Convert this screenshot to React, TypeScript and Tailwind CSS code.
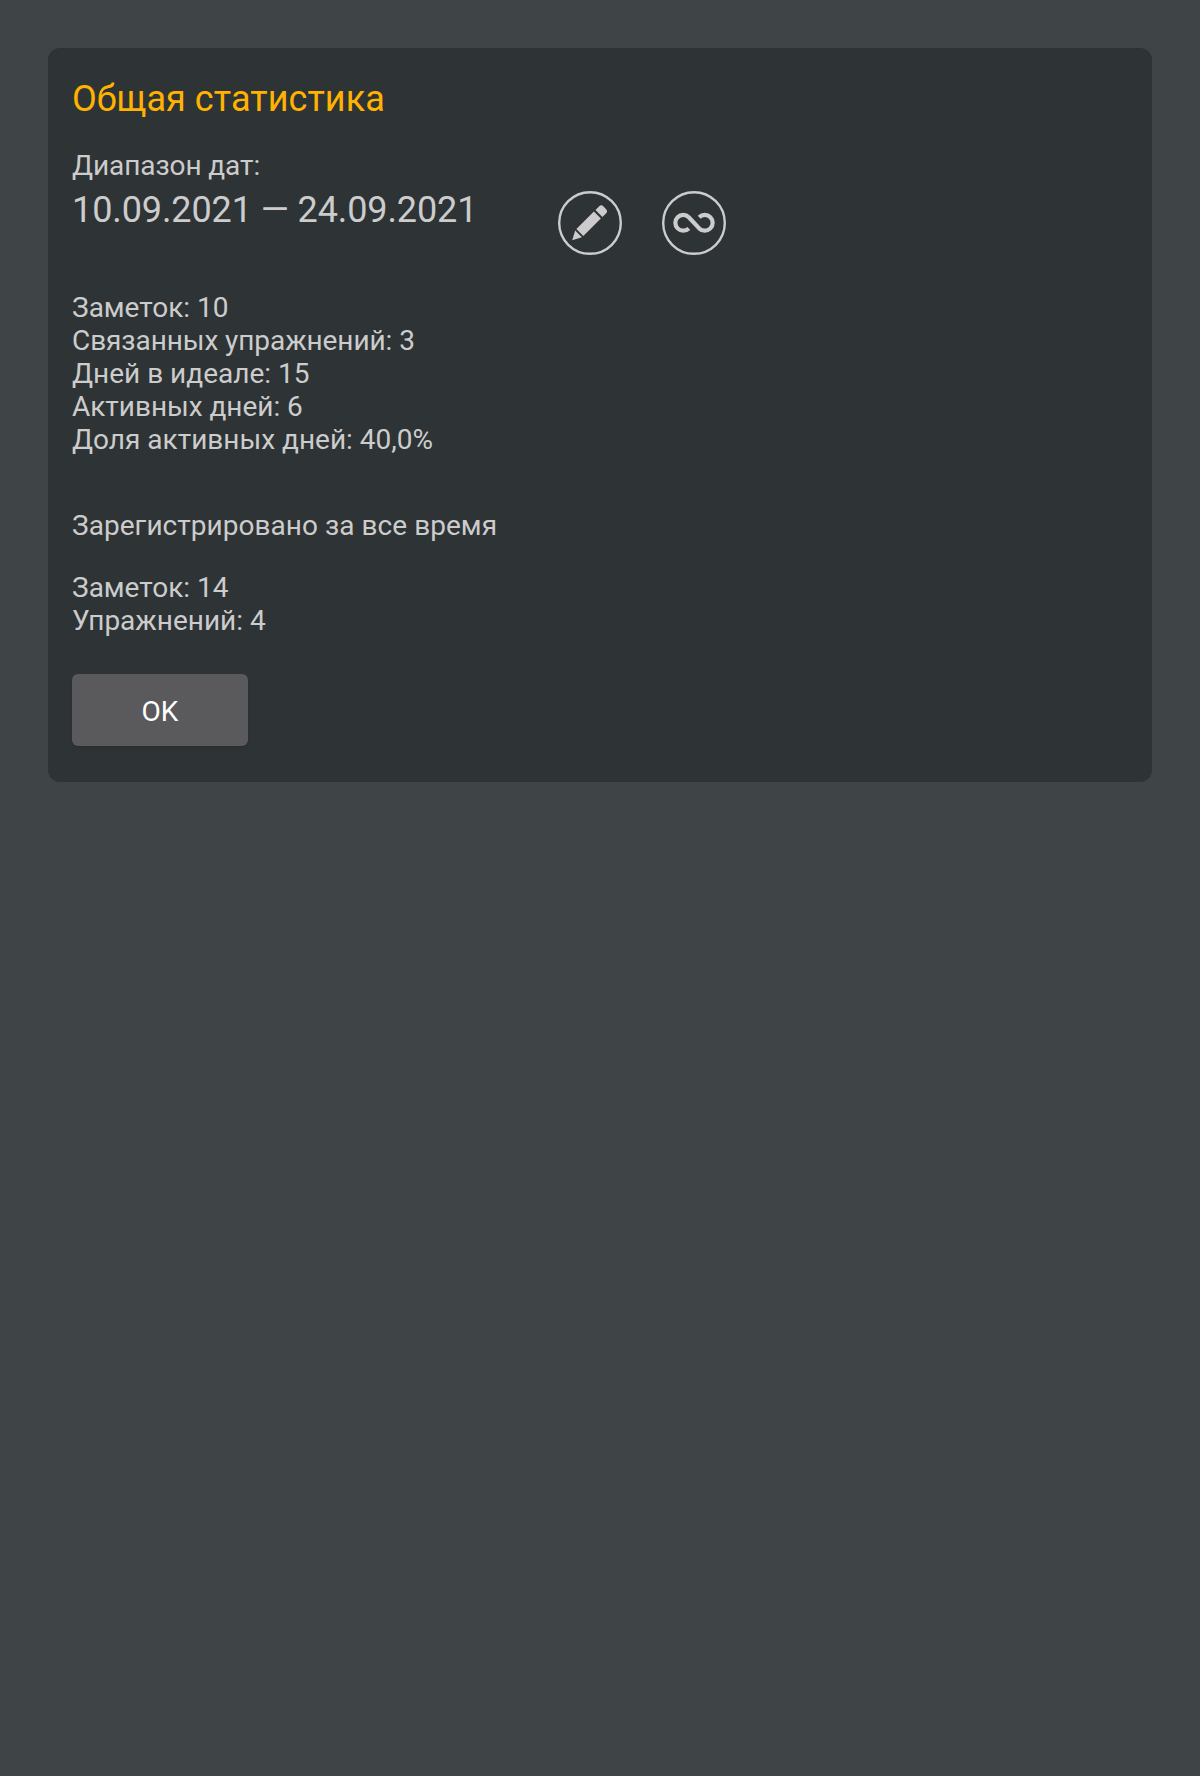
import type { ReactNode } from "react";

function RoundButton({ label, children }: { label: string; children: ReactNode }) {
  return (
    <button aria-label={label} className="size-16 shrink-0">
      <svg viewBox="0 0 64 64" className="block size-16" fill="none">
        <circle cx="32" cy="32" r="30.8" stroke="#cccccc" strokeWidth="2.4" />
        {children}
      </svg>
    </button>
  );
}

const rangeStats = [
  { text: "Заметок: 10", tracking: "" },
  { text: "Связанных упражнений: 3", tracking: "tracking-[-0.08px]" },
  { text: "Дней в идеале: 15", tracking: "" },
  { text: "Активных дней: 6", tracking: "tracking-[-0.03px]" },
  { text: "Доля активных дней: 40,0%", tracking: "" },
];

export default function App() {
  return (
    <main className="min-h-screen bg-[#3f4446] p-12 font-['Roboto',sans-serif]">
      <section className="h-[734px] rounded-xl bg-[#2e3335] px-6 pt-[30px] text-[28px] leading-[33px] text-[#cccccc]">
        <h1 className="text-4xl leading-[42px] tracking-[0.07px] text-[#ffb300]">Общая статистика</h1>
        <div className="mt-[29px] flex">
          <div className="w-[486px]">
            <p className="tracking-[-0.09px]">Диапазон дат:</p>
            <p className="mt-[7px] text-4xl leading-[42px] tracking-[-0.1px]">10.09.2021 — 24.09.2021</p>
          </div>
          <div className="flex gap-10 pt-[42px]">
            <RoundButton label="Изменить диапазон">
              <g transform="translate(14.2 49.2) rotate(-45)" fill="#cccccc">
                <path d="M0 0 L9 -4.8 V4.8 Z" />
                <path d="M10.8 -4.9 H35.6 V4.9 H10.8 Z" />
                <path d="M37.8 -4.9 H42.8 Q46 -4.9 46 -1.7 V1.7 Q46 4.9 42.8 4.9 H37.8 Z" />
              </g>
            </RoundButton>
            <RoundButton label="За все время">
              <path
                d="M26.8 37.4 A7.9 7.9 0 1 1 26.8 26.2 L37.2 37.4 A7.9 7.9 0 1 0 37.2 26.2"
                stroke="#cccccc"
                strokeWidth="4.2"
              />
            </RoundButton>
          </div>
        </div>
        <ul className="mt-9">
          {rangeStats.map(({ text, tracking }) => (
            <li key={text} className={tracking}>
              {text}
            </li>
          ))}
        </ul>
        <h2 className="mt-[53px] tracking-[0.04px]">Зарегистрировано за все время</h2>
        <p className="mt-[29px]">Заметок: 14</p>
        <p>Упражнений: 4</p>
        <button className="mt-[37px] flex h-[72px] w-44 items-center justify-center rounded-md bg-[#5a5a5c] pt-0.5 text-white shadow-[0_2px_3px_rgba(0,0,0,0.12)]">
          OK
        </button>
      </section>
    </main>
  );
}
